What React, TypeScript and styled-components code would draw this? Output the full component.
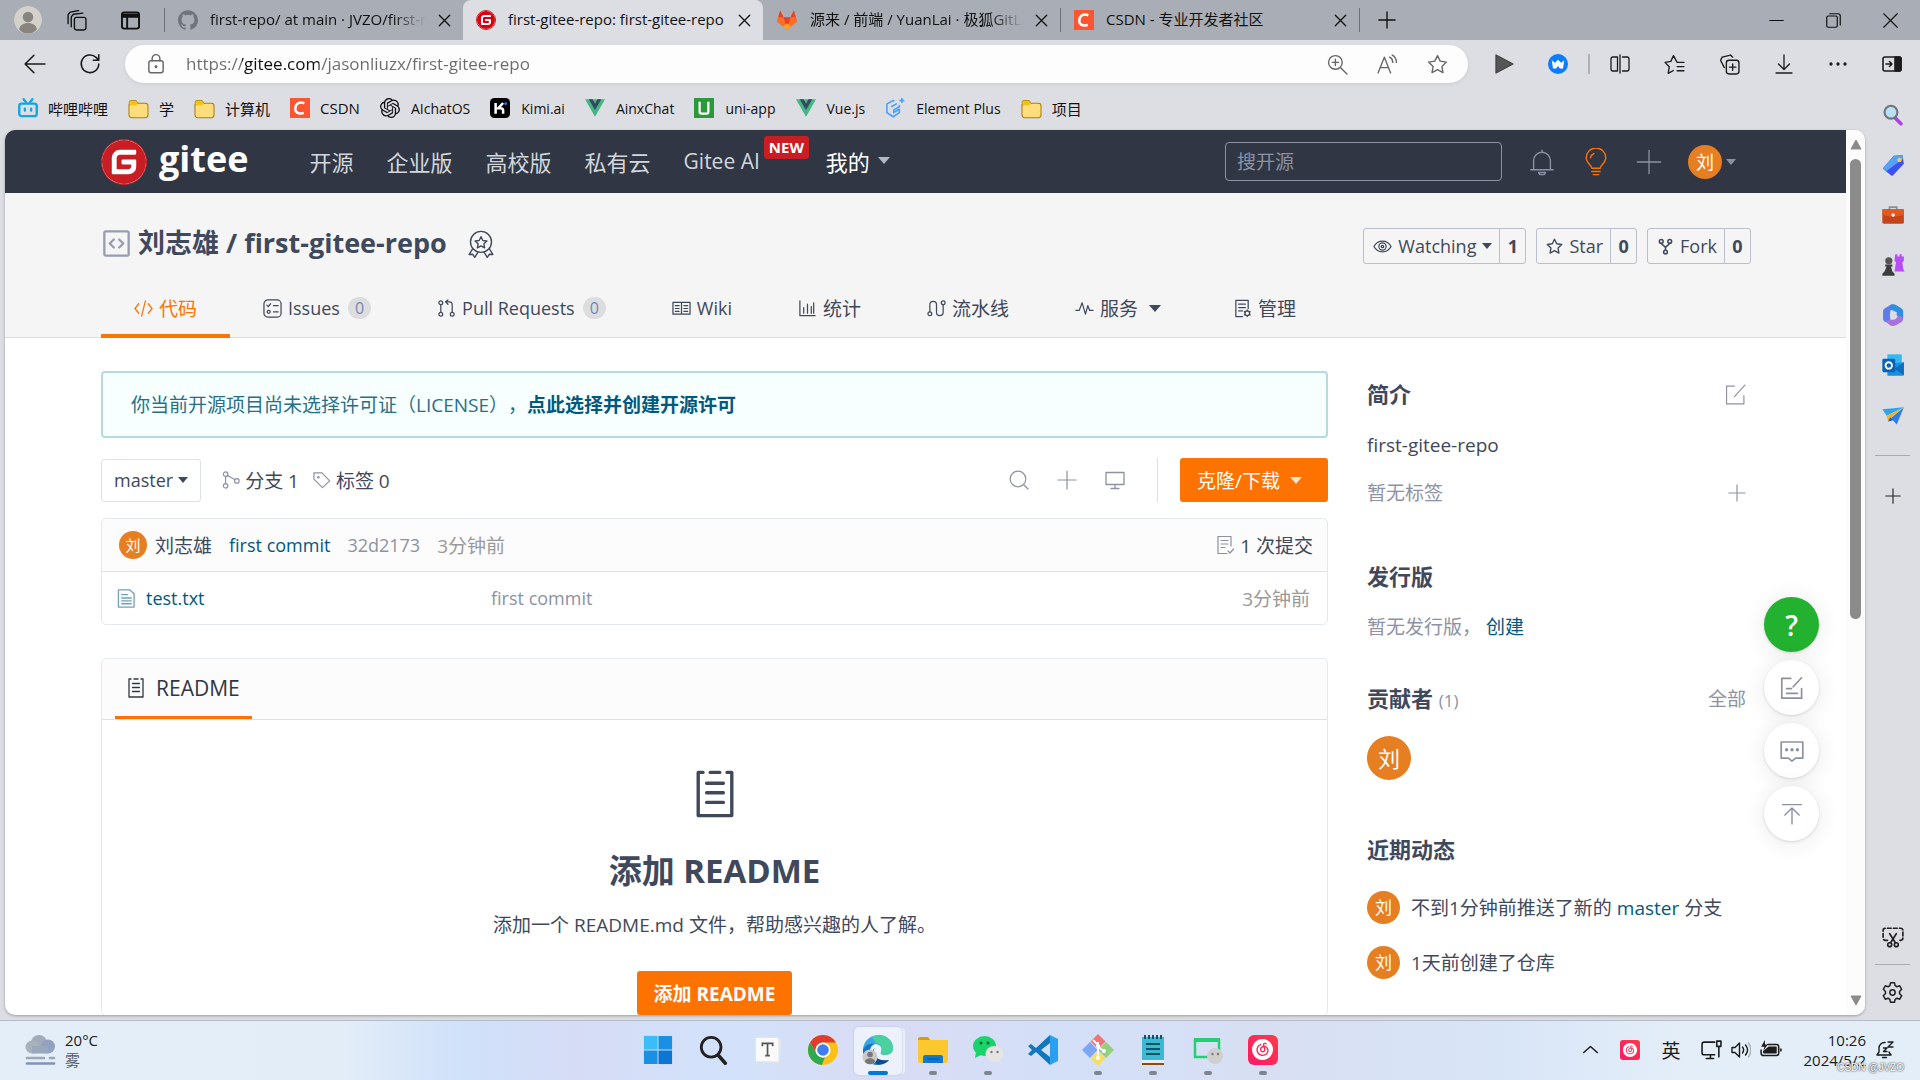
import React from "react";
import styled, { createGlobalStyle, css } from "styled-components";
import { SiGitee, SiOpenai, SiNeteasecloudmusic, SiGithub } from "react-icons/si";

const sans = `"Open Sans", "Noto Sans CJK SC", "Noto Sans", sans-serif`;
const ink = "#40485b";
const muted = "#8c92a4";
const blue = "#005980";
const orange = "#fe7300";
const line = "#dce3e8";

const Global = createGlobalStyle`
  *, *::before, *::after { box-sizing: border-box; }
  body { margin: 0; font-family: ${sans}; color: ${ink}; overflow: hidden; }
  h1, h2, h3, p { margin: 0; }
  a { color: inherit; text-decoration: none; }
  button { font: inherit; color: inherit; background: none; border: 0; padding: 0; cursor: pointer; }
  svg { display: block; flex: none; }
`;

/* ---------- icon helpers ---------- */

type IconProps = { size?: number; sw?: number; color?: string; children?: React.ReactNode };

function Line({ size = 20, sw = 1.3, color = "currentColor", children }: IconProps) {
  return (
    <svg width={size} height={size} viewBox="0 0 20 20" fill="none" stroke={color} strokeWidth={sw}
      strokeLinecap="round" strokeLinejoin="round" aria-hidden="true">
      {children}
    </svg>
  );
}

function Art({ size = 20, children }: IconProps) {
  return <svg width={size} height={size} viewBox="0 0 32 32" fill="none" aria-hidden="true">{children}</svg>;
}

const Caret = styled.span<{ $w?: number }>`
  width: 0;
  height: 0;
  border-left: ${(p) => p.$w ?? 5}px solid transparent;
  border-right: ${(p) => p.$w ?? 5}px solid transparent;
  border-top: ${(p) => (p.$w ?? 5) + 1}px solid currentColor;
`;

const Plus = ({ size = 20, sw = 1.3 }: IconProps) => <Line size={size} sw={sw}><path d="M10 1v18M1 10h18" /></Line>;
const CloseMark = () => <Line size={13} sw={2}><path d="M2 2l16 16M18 2L2 18" /></Line>;

const Folder = () => (
  <Art size={21}>
    <path d="M2 8a3 3 0 0 1 3-4h7l3 4-3 5H2z" fill="#f2c21c" stroke="#a8800c" strokeWidth="1.6" />
    <rect x="1.500" y="8" width="29" height="22" rx="4" fill="#ffdc7c" stroke="#a8800c" strokeWidth="1.6" />
    <path d="M2 8a3 3 0 0 1 3-4h7l3 4-2 3H3z" fill="#f2c21c" />
  </Art>
);
const Csdn = () => (
  <Art><path d="M0 0h32v32H0z" fill="#fc5531" />
    <path d="M23 8.500c-7-3-14 0-14.500 8-.3 6.500 4 9.500 13.500 7.500" stroke="#fff" strokeWidth="4" /></Art>
);
const Vue = () => (
  <Art><path d="M0 2h32L16 30z" fill="#41b883" /><path d="M6 2h6l4 7 4-7h6L16 19z" fill="#35495e" /></Art>
);
const Bili = () => (
  <Art size={20}><g stroke="#14a4e2" strokeWidth="3.800" strokeLinecap="round"><path d="M9 2l4 5M23 2l-4 5" />
    <rect x="2" y="9" width="28" height="20" rx="4" /><path d="M11 17v3M21 17v3" /></g></Art>
);
const Kimi = () => (
  <Art size={20}><rect width="32" height="32" rx="7" fill="#000" /><path d="M9 8v17M21 8l-8 8.500h4c3 0 4 2 4 4V25" stroke="#fff" strokeWidth="4" />
    <circle cx="25" cy="9" r="2.200" fill="#1783ff" /></Art>
);
const Uni = () => (
  <Art><path d="M0 0h32v32H0z" fill="#2b9939" /><path d="M9 6v16c0 2 1 3 3 3h8c2 0 3-1 3-3V6" stroke="#fff" strokeWidth="3.600" /></Art>
);
const ElementPlus = () => (
  <Art size={20}><g stroke="#409eff" strokeWidth="2.400"><path d="M15 5l-2-1L3 9.500v14L13 30l10-6.500V17" /><path d="M23 11v3l-9 5v4l9-5M19 9l-9 5" />
    <path d="M27 0v8M23 4h8" /></g></Art>
);
const Fox = () => (
  <Art size={22}><path d="M6 2L1 18l15 12 15-12L26 2l-5 10H11z" fill="#fc6d26" /><path d="M16 30L11 12h10z" fill="#e24329" />
    <path d="M6 2l5 10H3.500zM26 2l-5 10h7.500z" fill="#e24329" /><path d="M10 25l6-4 6 4-6 5z" fill="#fca326" /></Art>
);
const NeteaseTile = styled.span<{ $s: number }>`
  display: grid;
  place-items: center;
  width: ${(p) => p.$s}px;
  height: ${(p) => p.$s}px;
  border-radius: ${(p) => (p.$s > 24 ? 6 : 3)}px;
  background: linear-gradient(45deg, #fb1a63, #ff3b4b);
`;
const Netease = ({ size = 30 }: IconProps) => (
  <NeteaseTile $s={size}><SiNeteasecloudmusic size={Math.round(size * 0.7)} color="#fff" /></NeteaseTile>
);

const ReadmeIcon = ({ size = 20, sw = 1.3 }: IconProps) => (
  <Line size={size} sw={sw}><path d="M5 1H3v18h14V1h-2M8 1h4" /><path d="M6.500 5.500h7M6.500 9.500h7M6.500 13.500h7" /></Line>
);

/* ---------- browser window ---------- */

const Desktop = styled.div`
  display: flex;
  flex-direction: column;
  height: 100vh;
  background: #dddee3;
`;

const TabStrip = styled.header`
  display: flex;
  align-items: center;
  flex: none;
  height: 40px;
  background: #a9adb5;
  color: #111;
  font-size: 15px;
`;
const ProfileTools = styled.div`
  display: flex;
  align-items: center;
  gap: 34px;
  padding: 0 24px 0 14px;
`;
const Who = styled.button`
  width: 28px;
  height: 28px;
  border-radius: 50%;
  overflow: hidden;
  margin-right: -10px;
`;
const Tab = styled.div<{ $active?: boolean; $w: number }>`
  display: flex;
  align-items: center;
  gap: 12px;
  width: ${(p) => p.$w}px;
  height: 100%;
  padding: 0 12px 0 13px;
  ${(p) => p.$active && css`
    background: #dddee3;
    border-radius: 8px 8px 0 0;
  `}
`;
const TabText = styled.a<{ $fade?: boolean }>`
  flex: 1;
  min-width: 0;
  overflow: hidden;
  white-space: nowrap;
  font-size: 15px;
  line-height: 22px;
  padding-bottom: 2px;
  ${(p) => p.$fade && css`mask-image: linear-gradient(to right, #000 85%, transparent);`}
`;
const TabRule = styled.span`
  width: 1px;
  height: 24px;
  background: #6d7076;
`;
const NewTab = styled.button`
  padding: 0 18px;
`;
const WindowButtons = styled.div`
  display: flex;
  margin-left: auto;
  gap: 42px;
  padding-right: 22px;
`;

const Toolbar = styled.div`
  display: flex;
  align-items: center;
  flex: none;
  height: 48px;
  color: #1b1b1b;
`;
const NavButtons = styled.div`
  display: flex;
  gap: 33px;
  padding: 0 24px;
`;
const AddressBar = styled.form`
  display: flex;
  align-items: center;
  flex: 1;
  height: 38px;
  padding: 0 20px;
  gap: 19px;
  border-radius: 19px;
  background: #fdfdfe;
  box-shadow: 0 1px 4px rgba(0, 0, 0, 0.08);
  color: #666;
`;
const UrlInput = styled.input`
  flex: 1;
  min-width: 0;
  border: 0;
  outline: 0;
  padding: 0;
  font: 17px/26px ${sans};
  color: #6b6b6b;
  background: linear-gradient(to right, #6b6b6b 56px, #111 56px, #111 133px, #6b6b6b 133px);
  -webkit-background-clip: text;
  background-clip: text;
  -webkit-text-fill-color: transparent;
`;
const AddressTools = styled.div`
  display: flex;
  gap: 29px;
`;
const ToolIcons = styled.div`
  display: flex;
  align-items: center;
  gap: 34px;
  padding: 0 18px 0 26px;
`;
const ToolRule = styled.span`
  width: 2px;
  height: 20px;
  margin: 0 -14px;
  background: #aeb0b5;
`;

const Below = styled.div`
  display: flex;
  flex: 1;
  min-height: 0;
`;
const Left = styled.div`
  display: flex;
  flex-direction: column;
  flex: 1;
  min-width: 0;
`;
const Bookmarks = styled.nav`
  display: flex;
  align-items: center;
  flex: none;
  height: 42px;
  padding: 0 18px 2px;
  gap: 20px;
  color: #111;
`;
const Bookmark = styled.a<{ $latin?: boolean }>`
  display: flex;
  align-items: center;
  gap: ${(p) => (p.$latin ? 11 : 10)}px;
  font-size: ${(p) => (p.$latin ? 14 : 15)}px;
`;

const Rail = styled.aside`
  display: flex;
  flex-direction: column;
  align-items: center;
  width: 55px;
  padding: 13px 0 16px;
  color: #222;
`;
const RailApps = styled.div`
  display: grid;
  gap: 22px;
  justify-items: center;
`;
const RailRule = styled.hr`
  width: 35px;
  height: 1px;
  border: 0;
  margin: 26px 0 32px;
  background: #a9abb0;
`;
const RailBottom = styled.div`
  display: grid;
  justify-items: center;
  margin-top: auto;
  ${RailRule} { margin: 16px 0; }
`;

const Viewport = styled.div`
  position: relative;
  display: flex;
  flex: 1;
  min-height: 0;
  margin: 0 0 5px 5px;
  border-radius: 10px;
  overflow: hidden;
  background: #fff;
  box-shadow: 0 1px 3px rgba(0, 0, 0, 0.3);
`;
const ScrollTrack = styled.div`
  display: flex;
  flex-direction: column;
  align-items: center;
  justify-content: space-between;
  width: 19px;
  padding: 9px 0;
  background: #fcfcfc;
  color: #8b8b8b;
`;
const Thumb = styled.div`
  flex: 0 0 53%;
  width: 11px;
  margin: 9px 0 auto;
  border-radius: 6px;
  background: #8b8b8b;
`;
const Page = styled.div`
  flex: 1;
  min-width: 0;
  overflow: hidden;
  font-size: 18px;
`;

/* ---------- site header ---------- */

const SiteHeader = styled.header`
  display: flex;
  align-items: center;
  height: 63px;
  padding: 0 96px;
  background: #303643;
  color: #d3d6dc;
`;
const Brand = styled.a`
  display: flex;
  align-items: center;
  gap: 12px;
  color: #fff;
`;
const Wordmark = styled.span`
  padding-bottom: 6px;
  font-size: 36px;
  line-height: 44px;
  font-weight: 700;
`;
const BrandMark = styled.span`
  display: grid;
  place-items: center;
  border-radius: 50%;
  background: #fff;
  border: 1px solid #c71d23;
`;
const SiteNav = styled.nav`
  display: flex;
  align-items: center;
  gap: 33px;
  margin-left: 61px;
  padding-bottom: 2px;
  font-size: 22px;
`;
const Latin = styled.span`
  font-size: 21px;
`;
const NavLink = styled.a`
  position: relative;
  display: flex;
  align-items: center;
  gap: 8px;
`;
const Mine = styled(NavLink)`
  margin-left: 33px;
  color: #fff;
  ${Caret} { color: #b4b8c0; }
`;
const NewBadge = styled.span`
  position: absolute;
  left: calc(100% + 4px);
  top: -11px;
  padding: 0 5px;
  border-radius: 3px;
  background: #c71d23;
  color: #fff;
  font-size: 15px;
  line-height: 23px;
  font-weight: 700;
`;
const SearchInput = styled.input`
  width: 277px;
  height: 39px;
  margin-left: auto;
  padding: 0 11px;
  border: 1px solid #8c92a4;
  border-radius: 4px;
  background: transparent;
  color: #fff;
  font: 19px/28px ${sans};
  &::placeholder { color: #8c92a4; opacity: 1; }
`;
const SiteTools = styled.div`
  display: flex;
  align-items: center;
  gap: 26px;
  margin: 0 14px 0 26px;
  color: #8c92a4;
`;
const Account = styled.button`
  display: flex;
  align-items: center;
  gap: 4px;
`;
const Face = styled.span<{ $s: number; $f: number }>`
  display: inline-grid;
  place-items: center;
  flex: none;
  width: ${(p) => p.$s}px;
  height: ${(p) => p.$s}px;
  border-radius: 50%;
  background: #e67e22;
  color: #fff;
  font-size: ${(p) => p.$f}px;
  line-height: 1;
`;

/* ---------- repository header ---------- */

const RepoHeader = styled.div`
  padding: 35px 95px 0 96px;
  background: #f5f5f5;
  border-bottom: 1px solid #dcdddf;
`;
const TitleRow = styled.div`
  display: flex;
  align-items: center;
  height: 36px;
  margin-bottom: 14px;
`;
const Title = styled.h1`
  display: flex;
  align-items: center;
  gap: 8px;
  padding: 0 20px 6px 2px;
  font-size: 27px;
  line-height: 36px;
`;
const Medal = styled.span`
  padding-bottom: 4px;
`;
const Actions = styled.div`
  display: flex;
  gap: 10px;
  margin-left: auto;
`;
const ActionBox = styled.div`
  display: flex;
  height: 36px;
  border: 1px solid #b9bfcb;
  border-radius: 3px;
`;
const ActionMain = styled.button`
  display: flex;
  align-items: center;
  gap: 6px;
  padding: 0 7px 0 9px;
`;
const ActionCount = styled.a`
  width: 26px;
  border-left: 1px solid #b9bfcb;
  text-align: center;
  line-height: 34px;
  font-weight: 700;
`;
const RepoTabs = styled.nav`
  display: flex;
  height: 60px;
  margin-bottom: -1px;
`;
const RepoTab = styled.a<{ $active?: boolean }>`
  display: flex;
  align-items: center;
  gap: 6px;
  padding: 0 33px;
  border-top: 4px solid transparent;
  border-bottom: 4px solid ${(p) => (p.$active ? orange : "transparent")};
  color: ${(p) => (p.$active ? orange : ink)};
  ${Caret} { margin: 0 6px 0 5px; }
`;
const TabName = styled.span<{ $latin?: boolean }>`
  font-size: ${(p) => (p.$latin ? 18 : 19)}px;
`;
const Pill = styled.span`
  margin-left: 2px;
  padding: 0 7px;
  border-radius: 11px;
  background: #dddddf;
  color: #7388b0;
  font-size: 16px;
  line-height: 22px;
`;

/* ---------- content ---------- */

const Content = styled.main`
  display: grid;
  grid-template-columns: minmax(0, 1fr) 384px;
  gap: 39px;
  padding: 33px 95px 0 96px;
`;
const Notice = styled.p`
  padding: 1px 28px 0;
  border: 2px solid #b5dbe2;
  border-radius: 4px;
  background: #f8ffff;
  color: #276f86;
  font-size: 19px;
  line-height: 62px;
  text-spacing-trim: space-all;
  a { color: ${blue}; font-weight: 700; }
`;
const BranchBar = styled.div`
  display: flex;
  align-items: center;
  height: 44px;
  margin: 20px 0 16px;
  font-size: 19px;
`;
const BranchButton = styled.button`
  display: flex;
  align-items: center;
  gap: 5px;
  height: 43px;
  margin-right: 21px;
  padding: 0 12px;
  border: 1px solid ${line};
  border-radius: 3px;
  font-size: 18px;
`;
const RefLink = styled.a`
  display: flex;
  align-items: center;
  gap: 5px;
  margin-right: 14px;
  svg { color: ${muted}; }
`;
const RepoTools = styled.div`
  display: flex;
  align-items: center;
  gap: 28px;
  height: 44px;
  margin-left: auto;
  padding-right: 32px;
  border-right: 1px solid ${line};
  color: ${muted};
`;
const SolidButton = styled.button<{ $bold?: boolean }>`
  display: inline-flex;
  align-items: center;
  justify-content: center;
  gap: 10px;
  height: 44px;
  padding: 0 17px;
  border-radius: 3px;
  background: ${orange};
  color: #fff;
  font-size: 19px;
  font-weight: ${(p) => (p.$bold ? 700 : 400)};
`;
const CloneButton = styled(SolidButton)`
  width: 148px;
  margin-left: 22px;
  justify-content: flex-start;
  ${Caret} { opacity: 0.8; }
`;
const Box = styled.section`
  border: 1px solid #e3e9ed;
  border-radius: 5px;
  margin-bottom: 33px;
  background: #fff;
`;
const BoxHead = styled.div<{ $h: number }>`
  display: flex;
  align-items: center;
  height: ${(p) => p.$h}px;
  padding: 0 14px 0 17px;
  background: #fcfcfc;
  border-bottom: 1px solid ${line};
  border-radius: 5px 5px 0 0;
`;
const CommitInfo = styled.div`
  display: flex;
  align-items: center;
  gap: 17px;
  color: ${muted};
  font-size: 18px;
`;
const Author = styled.a`
  display: flex;
  align-items: center;
  gap: 8px;
  color: ${ink};
  font-size: 19px;
`;
const BlueLink = styled.a`
  color: ${blue};
`;
const Ago = styled.time`
  color: #999;
  font-size: 19px;
`;
const CommitCount = styled.a`
  display: flex;
  align-items: center;
  gap: 5px;
  margin-left: auto;
  font-size: 19px;
  svg { color: ${muted}; }
`;
const FileTable = styled.table`
  width: 100%;
  table-layout: fixed;
  border-collapse: collapse;
  font-size: 18px;
  color: ${muted};
  td { height: 52px; padding: 0 17px 0 15px; }
  td:first-child { width: 374px; }
  td:last-child { text-align: right; }
`;
const FileName = styled.a`
  display: flex;
  align-items: center;
  gap: 10px;
  color: ${blue};
`;
const ReadmeTab = styled.a`
  display: flex;
  align-items: center;
  gap: 10px;
  align-self: stretch;
  margin: 0 0 0 -4px;
  padding: 0 12px 0 11px;
  border-bottom: 3px solid ${orange};
  color: #303643;
  font-size: 21px;
`;
const ReadmeBody = styled.div`
  display: flex;
  flex-direction: column;
  align-items: center;
  padding-top: 50px;
  h2 { margin: 33px 0 20px; font-size: 33px; line-height: 40px; }
  p { margin-bottom: 32px; font-size: 19px; line-height: 28px; }
`;

const Side = styled.aside`
  padding: 8px 5px 0 0;
  font-size: 19px;
  line-height: 28px;
`;
const SideSection = styled.section<{ $after: number }>`
  margin-bottom: ${(p) => p.$after}px;
`;
const SideHead = styled.div`
  display: flex;
  align-items: center;
  justify-content: space-between;
  height: 30px;
  margin-bottom: 22px;
  h3 { font-size: 22px; line-height: 30px; }
  small { font-size: 17px; font-weight: 400; color: ${muted}; }
`;
const Grey = styled.span`
  color: ${muted};
`;
const GreyButton = styled.button`
  color: ${muted};
`;
const Description = styled.p`
  margin-bottom: 20px;
`;
const Split = styled.div`
  display: flex;
  align-items: center;
  justify-content: space-between;
  color: ${muted};
`;
const Feed = styled.ul`
  display: grid;
  gap: 22px;
  margin: 0;
  padding: 5px 0 0;
  list-style: none;
`;
const Activity = styled.li`
  display: flex;
  align-items: center;
  gap: 11px;
`;

const Floaters = styled.div`
  position: absolute;
  right: 46px;
  bottom: 174px;
  display: grid;
  gap: 8px;
`;
const Floater = styled.button<{ $green?: boolean }>`
  display: grid;
  place-items: center;
  width: 55px;
  height: 55px;
  border-radius: 50%;
  background: ${(p) => (p.$green ? "#23b130" : "#fff")};
  color: ${(p) => (p.$green ? "#fff" : muted)};
  box-shadow: 0 1px 3px rgba(0, 0, 0, 0.12), 0 2px 24px rgba(0, 0, 0, 0.09);
  font-size: 28px;
  font-weight: ${(p) => (p.$green ? 600 : 400)};
`;

/* ---------- taskbar ---------- */

const Taskbar = styled.footer`
  position: relative;
  display: grid;
  grid-template-columns: 1fr auto 1fr;
  align-items: center;
  flex: none;
  height: 60px;
  border-top: 1px solid #b4bcc8;
  background: linear-gradient(to right, #e3eef8 0%, #e2edf8 18%, #d0e1fa 24%, #d6dcf6 30%, #d2e2fa 38%, #d8dcf4 46%, #d3e0f8 56%, #d8dff3 66%, #d8e5f7 78%, #e3eef8 88%, #e3eef8 100%);
  color: #1b1b1b;
`;
const Weather = styled.button`
  display: flex;
  align-items: center;
  gap: 9px;
  padding: 0 0 2px 24px;
  text-align: left;
  font-size: 15px;
  line-height: 20px;
  span span { display: block; color: #555b63; }
`;
const Apps = styled.div`
  display: flex;
  gap: 7px;
  height: 48px;
`;
const AppButton = styled.button<{ $active?: boolean; $open?: boolean }>`
  display: grid;
  grid-template-rows: 1fr 4px;
  justify-items: center;
  align-items: center;
  width: 48px;
  padding-top: 2px;
  border-radius: 5px;
  ${(p) => p.$active && css`
    background: #edf1fb;
    box-shadow: 0 0 2px #b4bdd2, 4px 0 0 -1px #e9effb;
  `}
  &::after {
    content: "";
    width: ${(p) => (p.$active ? 20 : 8)}px;
    height: 4px;
    border-radius: 2px;
    background: ${(p) => (p.$active ? "#0078d4" : p.$open ? "#7e8591" : "transparent")};
  }
`;
const Tray = styled.div`
  display: flex;
  align-items: center;
  justify-self: end;
  padding: 0 25px 2px 0;
  gap: 9px;
`;
const TrayGroup = styled.div`
  display: flex;
  align-items: center;
  gap: 22px;
  margin-right: 11px;
  font-size: 19px;
`;
const Clock = styled.time`
  margin-left: 13px;
  text-align: right;
  font-size: 15px;
  line-height: 20px;
  white-space: pre-line;
`;
const Watermark = styled.span`
  position: absolute;
  right: 16px;
  bottom: 5px;
  font: 10px/14px "Liberation Sans", sans-serif;
  color: #fff;
  text-shadow: 0 0 2px #333, 0 0 1px #666;
`;

/* ---------- data ---------- */

const bookmarks: { icon: React.ReactNode; text: string; latin?: boolean }[] = [
  { icon: <Bili />, text: "哔哩哔哩" },
  { icon: <Folder />, text: "学" },
  { icon: <Folder />, text: "计算机" },
  { icon: <Csdn />, text: "CSDN" },
  { icon: <SiOpenai size={20} />, text: "AIchatOS", latin: true },
  { icon: <Kimi />, text: "Kimi.ai", latin: true },
  { icon: <Vue />, text: "AinxChat", latin: true },
  { icon: <Uni />, text: "uni-app", latin: true },
  { icon: <Vue />, text: "Vue.js", latin: true },
  { icon: <ElementPlus />, text: "Element Plus", latin: true },
  { icon: <Folder />, text: "项目" },
];

const repoTabs = [
  { text: "代码", active: true, icon: <path d="M5 5L1 10l4 5M15 5l4 5-4 5M12 2L8 18" /> },
  { text: "Issues", latin: true, count: 0, icon: <><rect x="1" y="1" width="18" height="18" rx="4" /><path d="M4 6.500l1.500 1.500L8 5M11 7h5M11 13.500h5" /><circle cx="6" cy="13.500" r="1.600" /></> },
  { text: "Pull Requests", latin: true, count: 0, icon: <><circle cx="4" cy="4" r="2" /><circle cx="4" cy="16" r="2" /><circle cx="16" cy="16" r="2" /><path d="M4 6v8M16 14V6c0-2-1-3-3-3H9M11.500 1L9 3l2.500 2.500" /></> },
  { text: "Wiki", latin: true, icon: <><path d="M1 3.500h18v12.500H1zM10 3.500V16" /><path d="M3.500 7h4M3.500 10h4M3.500 13h4M12.500 7h4M12.500 10h4M12.500 13h4" /></> },
  { text: "统计", icon: <path d="M2 2v15.500h16M6 9v6M10 5.500V15M14 8v7M16.500 4v11" /> },
  { text: "流水线", icon: <><circle cx="3" cy="15.500" r="2" /><circle cx="17" cy="4" r="2" /><path d="M3 13.500V6a3.500 3.500 0 0 1 7 0v8a3.500 3.500 0 0 0 7 0V6" /></> },
  { text: "服务", caret: true, icon: <path d="M1 12h3.500L7.500 4l3.500 12 2.500-9 2 5H19" /> },
  { text: "管理", icon: <><path d="M10 18.500H3v-17h13V10M6 5.500h7M6 9h7M6 12.500h4" /><circle cx="15" cy="15" r="2.500" /><path d="M15 11.500v1M15 17.500v1M12 13.300l.8.500M17.200 16.200l.8.500M18 13.300l-.8.500M12.800 16.200l-.8.500" /></> },
];

const WeChatArt = () => (
  <Art size={32}><ellipse cx="12.500" cy="12" rx="11.500" ry="10" fill="#19d46a" /><path d="M4 18l-1 6 6-3z" fill="#19d46a" />
    <ellipse cx="22.500" cy="20" rx="9" ry="8" fill="#e5e5e5" /><path d="M27 25l3 4-6-2z" fill="#e5e5e5" />
    <g fill="#17623a"><circle cx="9" cy="9" r="1.500" /><circle cx="16" cy="9" r="1.500" /></g>
    <g fill="#777"><circle cx="19.500" cy="18" r="1.200" /><circle cx="25.500" cy="18" r="1.200" /></g></Art>
);

const apps: { name: string; open?: boolean; active?: boolean; art: React.ReactNode }[] = [
  { name: "开始", art: <Art size={30}><g fill="#1a8fe3"><path d="M1 1h14.500v14.500H1z" fill="#3dbdf5" /><path d="M16.500 1H31v14.500H16.500zM1 16.500h14.500V31H1z" /><path d="M16.500 16.500H31V31H16.500z" fill="#0b76d3" /></g></Art> },
  { name: "搜索", art: <Art size={30}><circle cx="14" cy="13" r="10.500" stroke="#222" strokeWidth="3" /><path d="M22 22l7 8" stroke="#222" strokeWidth="4" strokeLinecap="round" /></Art> },
  { name: "Typora", art: <Art size={30}><path d="M8 3l22 2-2 25-20-2z" fill="#e6e6e6" /><path d="M3 3h24v25H3z" fill="#fafafa" /><path d="M10 12V9h11v3M15.500 9v13M13 22h5" stroke="#555" strokeWidth="1.800" /></Art> },
  { name: "Chrome", art: <Art size={32}><circle cx="16" cy="16" r="15" fill="#fbc116" /><path d="M3 8.500a15 15 0 0 1 26 0H16a7.500 7.500 0 0 0-6.500 11.300z" fill="#e33b2e" /><path d="M3 8.500l6.500 11.300A7.500 7.500 0 0 0 18 23.200L14.800 31A15 15 0 0 1 3 8.500z" fill="#2da94f" /><circle cx="16" cy="16" r="7.500" fill="#fff" /><circle cx="16" cy="16" r="5.800" fill="#3f7df0" /></Art> },
  { name: "Edge", active: true, art: <Art size={32}><path d="M1 15C2 6 9 1 17 1s14 6 14 13c0 5-4 7-8 7-3 0-5-1-4-3 2-4-1-8-6-8S4 11 1 15z" fill="#37a9e2" /><path d="M10 3c10-5 21 2 21 11 0 5-4 7-8 7-3 0-5-1-4-3 2-4 0-8-5-9z" fill="#4bd0a0" /><path d="M1 15c3-5 8-6 12-5-6 2-6 9-3 14s10 6 17 2c-3 4-8 5-11 5C7 31 0 24 1 15z" fill="#1574c4" /><path d="M13 14c-4 5 0 14 14 12-4 5-13 6-17 0-2-4-1-9 3-12z" fill="#114a8b" /><circle cx="8" cy="23" r="7.500" fill="#c9c9c9" /><circle cx="8" cy="20.500" r="2.800" fill="#777" /><path d="M3 28c0-5 10-5 10 0-3 3-7 3-10 0z" fill="#777" /></Art> },
  { name: "文件资源管理器", open: true, art: <Art size={32}><path d="M1 5c0-1 1-2 2-2h8l3 4H1z" fill="#d99a0b" /><path d="M1 6h30v20c0 2-1 3-2 3H3c-1 0-2-1-2-3z" fill="#fdc82f" /><path d="M6 29v-6c0-1 1-2 2-2h16c1 0 2 1 2 2v6z" fill="#0f78d0" /><path d="M10 25h12" stroke="#0a5aa4" strokeWidth="1.500" /></Art> },
  { name: "微信", open: true, art: <WeChatArt /> },
  { name: "VS Code", art: <Art size={32}><path d="M23 1L9 14 4 10l-3 2 4 4-4 4 3 2 5-4 14 13V1zM23 9v14l-9-7z" fill="#1277bd" fillRule="evenodd" /><path d="M23 1l8 4v22l-8 4z" fill="#2aa0ee" /></Art> },
  { name: "Git", open: true, art: <Art size={32}><path d="M16 0l7.500 7.500L16 15 8.500 7.500z" fill="#f27474" /><path d="M8 8l7.500 8L8 24 0 16z" fill="#7ea6f5" /><path d="M24 8l8 8-8 8-8-8z" fill="#95cf7c" /><path d="M16 17l7.500 7.500L16 32l-7.500-7.500z" fill="#f8dd63" /><path d="M16 8v17M16 13l6 4M11 6l5 5" stroke="#f4f6fb" strokeWidth="2" /><g fill="#fff"><circle cx="16" cy="12" r="2" /><circle cx="22" cy="17" r="2" /><circle cx="16" cy="24" r="2" /></g></Art> },
  { name: "记事本", open: true, art: <Art size={32}><path d="M5 3h22v26H5z" fill="#3dbad3" /><path d="M5 28h22v3H5z" fill="#8a4b17" /><path d="M5 26h22v3H5z" fill="#e8eef0" /><path d="M9 10h14M9 15h14M9 20h14" stroke="#0d5468" strokeWidth="2" /><path d="M8 1v4M12 1v4M16 1v4M20 1v4M24 1v4" stroke="#0d5468" strokeWidth="2" /></Art> },
  { name: "小程序", open: true, art: <Art size={32}><path d="M3 6h24v17H3z" stroke="#27cf74" strokeWidth="2.500" /><path d="M2 4h26v4H2z" fill="#27cf74" /><circle cx="23" cy="22" r="8" fill="#cfcfcf" /><g fill="#777"><circle cx="20.500" cy="20" r="1.200" /><circle cx="26" cy="20" r="1.200" /></g></Art> },
  { name: "网易云音乐", open: true, art: <Netease size={30} /> },
];

const railApps: { name: string; art: React.ReactNode }[] = [
  { name: "搜索", art: <><path d="M19 20l8 8" stroke="#b03df0" strokeWidth="5" strokeLinecap="round" /><circle cx="13" cy="12" r="9" fill="#b9e0f4" stroke="#6e767c" strokeWidth="3" /></> },
  { name: "购物", art: <><path d="M17 3l12-1 2 12-15 16c-1 1-2 1-3 0L3 22c-1-1-1-2 0-3z" fill="#3f4ff2" /><path d="M17 3l12-1 1 5L6 25l-3-3c-1-1-1-2 0-3z" fill="#55a2f8" /><circle cx="25" cy="9" r="3" fill="#ffd23c" /></> },
  { name: "工具", art: <><path d="M11 9V5h10v4" stroke="#8a8f94" strokeWidth="2.500" /><rect x="1" y="8" width="30" height="20" rx="2" fill="#c4431a" /><path d="M1 8h30v7c-8 4-22 4-30 0z" fill="#e4571f" /><circle cx="16" cy="16" r="2.500" fill="#e8e8e8" /></> },
  { name: "游戏", art: <><path d="M19 1h3v3h3V1h3v3h3v6l-2 2 1 9 2 4H18l2-13-2-2z" fill="#b64df5" /><circle cx="10" cy="10" r="5" fill="#555" /><path d="M5 15h10v3h-2l2 7 3 3v3H1v-3l3-3 3-7H5z" fill="#3d3d3d" /></> },
  { name: "Microsoft 365", art: <><path d="M14 1l-9 5c-2 1-3 3-3 5v10c0 3 2 4 4 5l6-3V12c0-3 1-4 4-5l3-4z" fill="#5f7de8" /><path d="M12 2c3-2 6-1 8 0l7 4c2 1 3 3 3 5v10l-9-4v-5L12 8z" fill="#2e8fe0" /><path d="M5 25l7 5c3 2 5 1 8 0l7-4c2-1 3-3 3-6l-7-4c-1 5-6 8-11 6z" fill="#a672dc" /><circle cx="16" cy="16" r="4.500" fill="#dddee3" /></> },
  { name: "Outlook", art: <><path d="M8 1h20v16H8z" fill="#35b8f1" /><path d="M8 14l23-2v17c0 1-1 2-2 2H8z" fill="#1490df" /><path d="M31 12v18L18 21z" fill="#0f6cbd" /><rect x="1" y="7" width="18" height="19" rx="2" fill="#0a62b8" /><circle cx="10" cy="16.500" r="4.500" stroke="#fff" strokeWidth="2.500" /></> },
  { name: "Drop", art: <><path d="M1 8l30-3-24 12z" fill="#2aa5ee" /><path d="M31 5L21 29l-8-9z" fill="#2b7de9" /><path d="M31 5L7 17l2 8 3-5z" fill="#f5b21b" /><path d="M9 25l3-6 4 4z" fill="#1b58b5" /></> },
];

const badgeStar = "M10 4.800l1.300 2.700 2.900.4-2.100 2 .5 2.900-2.600-1.400-2.600 1.400.5-2.900-2.100-2 2.900-.4z";
const star = "M10 1.500l2.600 5.300 5.900.9-4.300 4.100 1 5.900-5.200-2.800-5.200 2.800 1-5.900L1.500 7.700l5.900-.9z";

function BrowserTabs() {
  return (
    <TabStrip>
      <ProfileTools>
        <Who aria-label="个人资料"><Art size={28}><circle cx="16" cy="16" r="16" fill="#d4d1cb" /><circle cx="16" cy="12.500" r="6" fill="#89847e" /><path d="M6 27c0-10 20-10 20 0-6 6-14 6-20 0z" fill="#89847e" /></Art></Who>
        <button aria-label="工作区"><Line size={21}><rect x="8" y="7" width="11" height="12" rx="2" /><path d="M5 16V6.500L7 4l9-1M2 13V4.500L4 2l8-1.500" /></Line></button>
        <button aria-label="标签页操作"><Line size={19} sw={2}><rect x="1" y="1.500" width="18" height="17" rx="2.500" /><path d="M1 4h18M1 6h18M6.500 6v12" /></Line></button>
      </ProfileTools>
      <TabRule />
      <Tab $w={298}>
        <SiGithub size={20} color="#6f757d" /><TabText href="#" $fade>first-repo/ at main · JVZO/first-repo</TabText><button aria-label="关闭"><CloseMark /></button>
      </Tab>
      <Tab $active $w={300}>
        <BrandMark><SiGitee size={18} color="#d8000f" /></BrandMark><TabText href="#">first-gitee-repo: first-gitee-repo</TabText><button aria-label="关闭"><CloseMark /></button>
      </Tab>
      <Tab $w={297}>
        <Fox /><TabText href="#" $fade>源来 / 前端 / YuanLai · 极狐GitLab</TabText><button aria-label="关闭"><CloseMark /></button>
      </Tab>
      <TabRule />
      <Tab $w={298}>
        <Csdn /><TabText href="#">CSDN - 专业开发者社区</TabText><button aria-label="关闭"><CloseMark /></button>
      </Tab>
      <TabRule />
      <NewTab aria-label="新建标签页"><Plus size={18} sw={1.5} /></NewTab>
      <WindowButtons>
        <button aria-label="最小化"><Line size={15} sw={1.6}><path d="M1 10h18" /></Line></button>
        <button aria-label="还原"><Line size={15} sw={1.6}><rect x="1" y="4" width="14" height="15" rx="2" /><path d="M5 1h11a3 3 0 0 1 3 3v12" /></Line></button>
        <button aria-label="关闭窗口"><Line size={15} sw={1.5}><path d="M1 1l18 18M19 1L1 19" /></Line></button>
      </WindowButtons>
    </TabStrip>
  );
}

function BrowserToolbar() {
  return (
    <Toolbar>
      <NavButtons>
        <button aria-label="后退"><Line size={22} sw={1.4}><path d="M19 10H1M9 2l-8 8 8 8" /></Line></button>
        <button aria-label="刷新"><Line size={22} sw={1.4}><path d="M18 10a8 8 0 1 1-2.500-6L18 6.500M18 1.500v5h-5" /></Line></button>
      </NavButtons>
      <AddressBar>
        <Line size={22}><rect x="3.500" y="7" width="13" height="11" rx="2" /><path d="M6.500 7V5a3.500 3.500 0 0 1 7 0v2" /><circle cx="10" cy="12.500" r=".7" fill="currentColor" /></Line>
        <UrlInput aria-label="地址" defaultValue="https://gitee.com/jasonliuzx/first-gitee-repo" />
        <AddressTools>
          <Line size={21}><circle cx="8" cy="8" r="6.500" /><path d="M13 13l6 6M8 5v6M5 8h6" /></Line>
          <Line size={21}><path d="M1 18L7 3l6 15M3 13h8M12 3c2 1 3 3 3 5M14.500 1c3 1.500 4 4 4 7" /></Line>
          <Line size={21}><path d={star} /></Line>
        </AddressTools>
      </AddressBar>
      <ToolIcons>
        <Line size={20} color="#444"><path d="M2 1l17 9-17 9z" fill="#555" /></Line>
        <Art size={20}><circle cx="16" cy="16" r="16" fill="#0a7cff" /><path d="M6 10l5 4 5-5 5 5 5-4-2 13h-5l-3-4-3 4H8z" fill="#fff" /></Art>
        <ToolRule />
        <Line size={20}><path d="M7.500 3H3a2 2 0 0 0-2 2v10a2 2 0 0 0 2 2h4.500zM12.500 3H17a2 2 0 0 1 2 2v10a2 2 0 0 1-2 2h-4.500M10 1v18" /></Line>
        <Line size={21}><path d="M12 7L9 1.500 6.500 7 1 8l4 4.200L4 18.500l5-2.800M12.500 8h6.500M12.500 12H19M12.500 16H19" /></Line>
        <Line size={21}><rect x="7" y="6" width="12" height="13" rx="2.500" /><path d="M13 9.500v6M10 12.500h6M5 13L1.500 6 3 3l8-2 2 2" /></Line>
        <Line size={20}><path d="M10 1v14M4.500 10l5.500 5.500 5.500-5.500M2 19h16" /></Line>
        <Line size={20}><g fill="currentColor"><circle cx="3" cy="10" r="1" /><circle cx="10" cy="10" r="1" /><circle cx="17" cy="10" r="1" /></g></Line>
        <Line size={20} sw={1.6}><rect x="1" y="3" width="18" height="14" rx="2" /><path d="M13 3h5l1 1v12l-1 1h-5z" fill="currentColor" /><path d="M4 10h6M7.500 7.500L10 10l-2.500 2.500" /></Line>
      </ToolIcons>
    </Toolbar>
  );
}

function GiteeHeader() {
  return (
    <SiteHeader>
      <Brand href="#"><BrandMark><SiGitee size={44} color="#c71d23" /></BrandMark><Wordmark>gitee</Wordmark></Brand>
      <SiteNav>
        <NavLink href="#">开源</NavLink>
        <NavLink href="#">企业版</NavLink>
        <NavLink href="#">高校版</NavLink>
        <NavLink href="#">私有云</NavLink>
        <NavLink href="#"><Latin>Gitee AI</Latin><NewBadge>NEW</NewBadge></NavLink>
        <Mine href="#">我的<Caret $w={6} /></Mine>
      </SiteNav>
      <SearchInput aria-label="搜开源" placeholder="搜开源" />
      <SiteTools>
        <Line size={28} sw={1}><path d="M2 15.500h16M4 15.500V9a6 6 0 0 1 12 0v6.500M10 3V1.500M7.500 17.500h5l-1 1.500h-3z" /></Line>
        <Line size={28} sw={1} color={orange}><path d="M7 14.500c0-2-4-4-4-7.500a7 7 0 0 1 14 0c0 3.500-4 5.500-4 7.500zM7 16.800h6M8 19h4M6 7a4 4 0 0 1 2.500-3" /></Line>
        <Plus size={26} sw={1} />
        <Account aria-label="账户"><Face $s={34} $f={18}>刘</Face><Caret /></Account>
      </SiteTools>
    </SiteHeader>
  );
}

function RepositoryHeader() {
  return (
    <RepoHeader>
      <TitleRow>
        <Title>
          <Line size={27} sw={1.7} color="#979daf"><rect x="1" y="1" width="18" height="18" rx="1" /><path d="M8 7l-3 3 3 3M12 7l3 3-3 3" /></Line>
          <a href="#">刘志雄 / first-gitee-repo</a>
        </Title>
        <Medal><Line size={28} sw={1}><circle cx="10" cy="8.500" r="7.500" /><path d={badgeStar} /><path d="M4 13.500l-2.500 4 2.500-.2 1.500 2.200 2.300-3.600M16 13.500l2.500 4-2.500-.2-1.500 2.200-2.300-3.600" /></Line></Medal>
        <Actions>
          <ActionBox>
            <ActionMain><Line size={19}><path d="M1 10c4-7.500 14-7.500 18 0-4 7.500-14 7.500-18 0z" /><circle cx="10" cy="10" r="3.800" /><circle cx="10" cy="10" r="1.300" /></Line>Watching<Caret /></ActionMain>
            <ActionCount href="#">1</ActionCount>
          </ActionBox>
          <ActionBox>
            <ActionMain><Line size={17} sw={1.6}><path d={star} /></Line>Star</ActionMain>
            <ActionCount href="#">0</ActionCount>
          </ActionBox>
          <ActionBox>
            <ActionMain><Line size={17} sw={1.8}><circle cx="5" cy="4" r="2.200" /><circle cx="15" cy="4" r="2.200" /><circle cx="10" cy="16.500" r="2.200" /><path d="M5 6.500L10 11l5-4.500M10 11v3" /></Line>Fork</ActionMain>
            <ActionCount href="#">0</ActionCount>
          </ActionBox>
        </Actions>
      </TitleRow>
      <RepoTabs>
        {repoTabs.map((t) => (
          <RepoTab key={t.text} href="#" $active={t.active}>
            <Line size={19}>{t.icon}</Line>
            <TabName $latin={t.latin}>{t.text}</TabName>
            {t.count !== undefined && <Pill>{t.count}</Pill>}
            {t.caret && <Caret $w={6} />}
          </RepoTab>
        ))}
      </RepoTabs>
    </RepoHeader>
  );
}

function MainColumn() {
  return (
    <div>
      <Notice>你当前开源项目尚未选择许可证（LICENSE），<a href="#">点此选择并创建开源许可</a></Notice>
      <BranchBar>
        <BranchButton>master<Caret /></BranchButton>
        <RefLink href="#"><Line size={18}><circle cx="4" cy="3.500" r="2.500" /><circle cx="4" cy="16.500" r="2.500" /><circle cx="16.500" cy="11" r="2.500" /><path d="M4 6v8M6 5l8 4.500" /></Line>分支 1</RefLink>
        <RefLink href="#"><Line size={18}><path d="M1 2v7l9.500 9.500 8-7.500L10 2z" /><circle cx="6" cy="7" r=".8" fill="currentColor" /></Line>标签 0</RefLink>
        <RepoTools>
          <Line size={20} sw={1.2}><circle cx="9" cy="9" r="7.800" /><path d="M14.500 14.500L19 19" /></Line>
          <Plus size={20} sw={1.2} />
          <Line size={20} sw={1.3}><path d="M1 2.500h18v12H1zM10 14.500V18M6 18.500h8" /></Line>
        </RepoTools>
        <CloneButton>克隆/下载<Caret $w={6} /></CloneButton>
      </BranchBar>
      <Box>
        <BoxHead $h={53}>
          <CommitInfo>
            <Author href="#"><Face $s={28} $f={15}>刘</Face>刘志雄</Author>
            <BlueLink href="#">first commit</BlueLink>
            <a href="#">32d2173</a>
            <Ago>3分钟前</Ago>
          </CommitInfo>
          <CommitCount href="#">
            <Line size={20} sw={1.2}><path d="M12 18.500H3v-17h13V11M6 5.500h7M6 9h7M6 12.500h4M13 16l2 2 3.500-4" /></Line>1 次提交
          </CommitCount>
        </BoxHead>
        <FileTable>
          <tbody>
            <tr>
              <td><FileName href="#"><Line size={19} sw={1.4} color="#6fa3b8"><path d="M1.500 1h12L18 5v14H1.500zM5 6h6M5 9.500h10M5 12.500h10M5 15.500h10" /></Line>test.txt</FileName></td>
              <td><a href="#">first commit</a></td>
              <td><Ago>3分钟前</Ago></td>
            </tr>
          </tbody>
        </FileTable>
      </Box>
      <Box>
        <BoxHead $h={61}><ReadmeTab href="#"><ReadmeIcon size={20} />README</ReadmeTab></BoxHead>
        <ReadmeBody>
          <ReadmeIcon size={48} sw={1.4} />
          <h2>添加 README</h2>
          <p>添加一个 README.md 文件，帮助感兴趣的人了解。</p>
          <SolidButton $bold>添加 README</SolidButton>
        </ReadmeBody>
      </Box>
    </div>
  );
}

function SideColumn() {
  return (
    <Side>
      <SideSection $after={54}>
        <SideHead>
          <h3>简介</h3>
          <GreyButton aria-label="编辑简介"><Line size={21} sw={1.1}><path d="M9 2H1.500v17H18v-8M19 1L9 12" /></Line></GreyButton>
        </SideHead>
        <Description>first-gitee-repo</Description>
        <Split>暂无标签<GreyButton aria-label="添加标签"><Plus size={18} /></GreyButton></Split>
      </SideSection>
      <SideSection $after={43}>
        <SideHead><h3>发行版</h3></SideHead>
        <Grey>暂无发行版， </Grey><BlueLink href="#">创建</BlueLink>
      </SideSection>
      <SideSection $after={54}>
        <SideHead><h3>贡献者 <small>(1)</small></h3><Grey>全部</Grey></SideHead>
        <Split><Face $s={44} $f={22}>刘</Face></Split>
      </SideSection>
      <SideSection $after={0}>
        <SideHead><h3>近期动态</h3></SideHead>
        <Feed>
          <Activity><Face $s={33} $f={17}>刘</Face><span>不到1分钟前推送了新的 <BlueLink href="#">master</BlueLink> 分支</span></Activity>
          <Activity><Face $s={33} $f={17}>刘</Face><span>1天前创建了仓库</span></Activity>
        </Feed>
      </SideSection>
    </Side>
  );
}

function EdgeRail() {
  return (
    <Rail>
      <RailApps>
        {railApps.map((a) => <button key={a.name} aria-label={a.name}><Art size={28}><g transform="translate(3 3) scale(.82)">{a.art}</g></Art></button>)}
      </RailApps>
      <RailRule />
      <Plus size={16} sw={1.4} />
      <RailBottom>
        <Line size={22} sw={1.5}><path d="M5 13H3a2 2 0 0 1-2-2V4a2 2 0 0 1 2-2h14a2 2 0 0 1 2 2v7a2 2 0 0 1-2 2h-2" strokeDasharray="3.500 2" /><path d="M7 7l5 8M13 7l-5 8" /><circle cx="7" cy="17" r="1.800" /><circle cx="13" cy="17" r="1.800" /></Line>
        <RailRule />
        <Line size={23}><circle cx="10" cy="10" r="2.300" /><path d="M8.300 1.500h3.400l.6 2.600 1.500.9 2.500-.8 1.700 3-1.900 1.900v1.800l1.900 1.900-1.700 3-2.500-.8-1.500.9-.6 2.600H8.300l-.6-2.600-1.500-.9-2.500.8-1.700-3 1.900-1.900V9.100L2 7.200l1.700-3 2.500.8 1.500-.9z" /></Line>
      </RailBottom>
    </Rail>
  );
}

function WindowsTaskbar() {
  return (
    <Taskbar>
      <Weather>
        <Art size={32}><circle cx="15" cy="9" r="8" fill="#a3abb8" /><circle cx="8" cy="13" r="6.500" fill="#a9b1bd" /><circle cx="24" cy="12.500" r="7" fill="#93a3bf" /><path d="M8 12h16v7.500H8z" fill="#9aa8be" /><path d="M3 24h17M26 24h4" stroke="#9ba6b6" strokeWidth="2.600" strokeLinecap="round" /><path d="M3 29.500h27" stroke="#8492b8" strokeWidth="2.600" strokeLinecap="round" /></Art>
        <span>20°C<span>雾</span></span>
      </Weather>
      <Apps>
        {apps.map((a) => <AppButton key={a.name} aria-label={a.name} $active={a.active} $open={a.open}>{a.art}</AppButton>)}
      </Apps>
      <Tray>
        <TrayGroup>
          <Line size={15} sw={2}><path d="M1 14l9-8 9 8" /></Line>
          <Netease size={20} />
          <span>英</span>
        </TrayGroup>
        <Line size={21} sw={1.5}><path d="M13 3H3a2 2 0 0 0-2 2v8a2 2 0 0 0 2 2h10M9 15v3M5 18.500h7M15 2h4v5h-4zM17 7v10" /></Line>
        <Line size={20} sw={1.4}><path d="M1 7.500h3L8.500 3v14L4 12.500H1zM11.500 7c1.500 2 1.500 4 0 6M14.500 5c2.500 3 2.500 7 0 10" /><path d="M17.500 3c3 4 3 10 0 14" stroke="#a9b0b8" /></Line>
        <Line size={22} sw={1.4}><path d="M7 5h8a2 2 0 0 1 2 2v6a2 2 0 0 1-2 2H3a2 2 0 0 1-2-2v-3M19 9v2" /><path d="M8 7.500h6.500v5H3.500v-1z" fill="currentColor" /><path d="M4.500 1L1 7h3l-1 4 4-6H4.500z" fill="currentColor" stroke="none" /></Line>
        <Clock>{"10:26\n2024/5/2"}</Clock>
        <Line size={20} sw={1.4}><path d="M2 15h14l-2-3M2 15l2-3V8a5.500 5.500 0 0 1 6-5.500M7.500 17.500h4M13 2h5l-5 5h5M8.500 8h3.500l-3.500 3.500h3.500" /></Line>
      </Tray>
      <Watermark>CSDN @JVZO</Watermark>
    </Taskbar>
  );
}

export default function App() {
  return (
    <Desktop lang="zh-CN">
      <Global />
      <BrowserTabs />
      <BrowserToolbar />
      <Below>
        <Left>
          <Bookmarks>
            {bookmarks.map((b, i) => <Bookmark key={i} href="#" $latin={b.latin}>{b.icon}{b.text}</Bookmark>)}
          </Bookmarks>
          <Viewport>
            <Page>
              <GiteeHeader />
              <RepositoryHeader />
              <Content>
                <MainColumn />
                <SideColumn />
              </Content>
            </Page>
            <ScrollTrack>
              <svg width="12" height="11" viewBox="0 0 12 11"><path d="M6 1l5 9H1z" fill="#8b8b8b" stroke="#8b8b8b" strokeLinejoin="round" /></svg>
              <Thumb />
              <svg width="12" height="11" viewBox="0 0 12 11"><path d="M6 10l5-9H1z" fill="#8b8b8b" stroke="#8b8b8b" strokeLinejoin="round" /></svg>
            </ScrollTrack>
            <Floaters>
              <Floater $green aria-label="帮助">?</Floater>
              <Floater aria-label="反馈"><Line size={24} sw={1.4}><path d="M9 2H1.500v16.500H18v-8M18 1.500L11 9M5.500 10.500h4M5.500 14.500h9" /></Line></Floater>
              <Floater aria-label="评论"><Line size={24} sw={1.4}><path d="M1 2.500h18V16h-6l-3 2.500L7 16H1z" /><g fill="currentColor"><circle cx="5.500" cy="9" r=".7" /><circle cx="10" cy="9" r=".7" /><circle cx="14.500" cy="9" r=".7" /></g></Line></Floater>
              <Floater aria-label="回到顶部"><Line size={22} sw={1.3}><path d="M1.500 1.500h17M10 19V5M3.500 11L10 4.500l6.500 6.500" /></Line></Floater>
            </Floaters>
          </Viewport>
        </Left>
        <EdgeRail />
      </Below>
      <WindowsTaskbar />
    </Desktop>
  );
}
